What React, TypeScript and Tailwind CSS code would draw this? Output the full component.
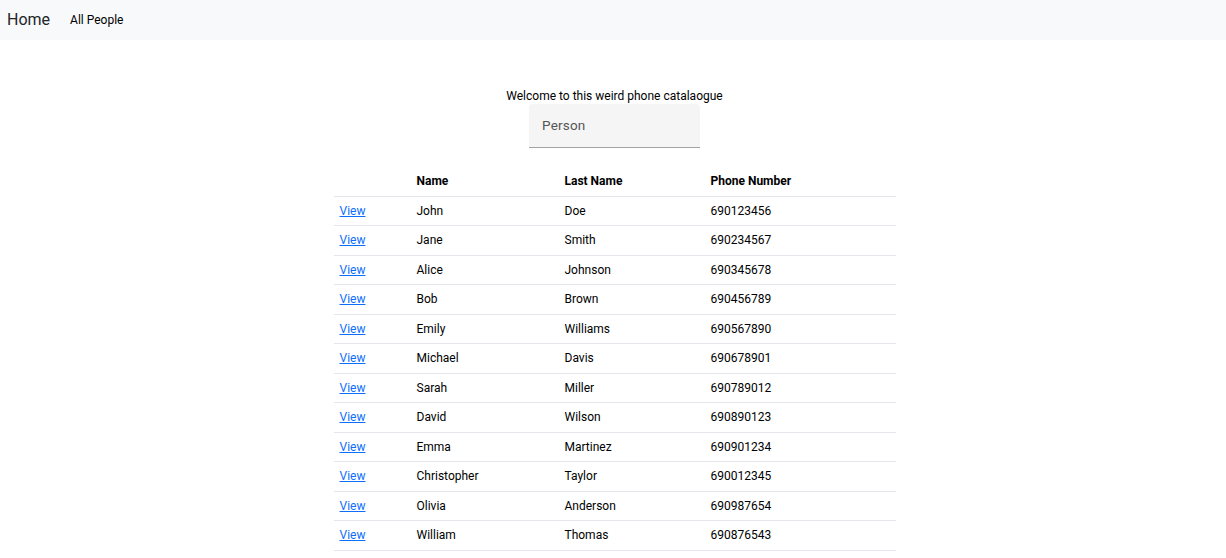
import React, { useState } from 'react';

type Person = { name: string; lastName: string; phone: string };

const people: Person[] = [
  { name: 'John', lastName: 'Doe', phone: '690123456' },
  { name: 'Jane', lastName: 'Smith', phone: '690234567' },
  { name: 'Alice', lastName: 'Johnson', phone: '690345678' },
  { name: 'Bob', lastName: 'Brown', phone: '690456789' },
  { name: 'Emily', lastName: 'Williams', phone: '690567890' },
  { name: 'Michael', lastName: 'Davis', phone: '690678901' },
  { name: 'Sarah', lastName: 'Miller', phone: '690789012' },
  { name: 'David', lastName: 'Wilson', phone: '690890123' },
  { name: 'Emma', lastName: 'Martinez', phone: '690901234' },
  { name: 'Christopher', lastName: 'Taylor', phone: '690012345' },
  { name: 'Olivia', lastName: 'Anderson', phone: '690987654' },
  { name: 'William', lastName: 'Thomas', phone: '690876543' },
];

export default function App() {
  const [search, setSearch] = useState('');

  return (
    <div className="min-h-screen bg-white text-[12px] text-black font-['Roboto',sans-serif]">
      {/* Top navbar */}
      <nav className="flex h-10 items-center bg-[#f8f9fa] pl-[7px]">
        <a href="#" className="mr-[20px] text-[16px] leading-none text-[#212529]">
          Home
        </a>
        <a href="#" className="text-[12px] text-black">
          All People
        </a>
      </nav>

      <div className="pl-[3px]">
        <div className="flex flex-col items-center pt-[48px]">
          <p className="leading-[16px]">Welcome to this weird phone catalaogue</p>
          <div className="flex h-[44px] w-[171px] items-center rounded-t-[4px] border-b border-[#a3a3a3] bg-[#f5f5f5] px-[13px]">
            <input
              value={search}
              onChange={(e) => setSearch(e.target.value)}
              placeholder="Person"
              className="w-full bg-transparent text-[13.5px] tracking-[0.2px] text-[#333] outline-none placeholder:text-[#555]"
            />
          </div>
        </div>

        <table className="mx-auto mt-[19px] w-[562px] border-collapse text-left">
          <thead>
            <tr className="h-[29px] border-b border-[#e3e6ea]">
              <th className="w-[77px]" />
              <th className="w-[148px] pl-[6px] font-bold">Name</th>
              <th className="w-[146px] pl-[6px] font-bold">Last Name</th>
              <th className="pl-[6px] font-bold">Phone Number</th>
            </tr>
          </thead>
          <tbody>
            {people
              .filter((p) => (p.name + ' ' + p.lastName).toLowerCase().includes(search.toLowerCase()))
              .map((p) => (
                <tr key={p.phone} className="h-[29.5px] border-b border-[#e3e6ea]">
                  <td className="pl-[6px]">
                    <a href="#" className="text-[#0d6efd] underline">
                      View
                    </a>
                  </td>
                  <td className="pl-[6px]">{p.name}</td>
                  <td className="pl-[6px]">{p.lastName}</td>
                  <td className="pl-[6px]">{p.phone}</td>
                </tr>
              ))}
          </tbody>
        </table>
      </div>
    </div>
  );
}
